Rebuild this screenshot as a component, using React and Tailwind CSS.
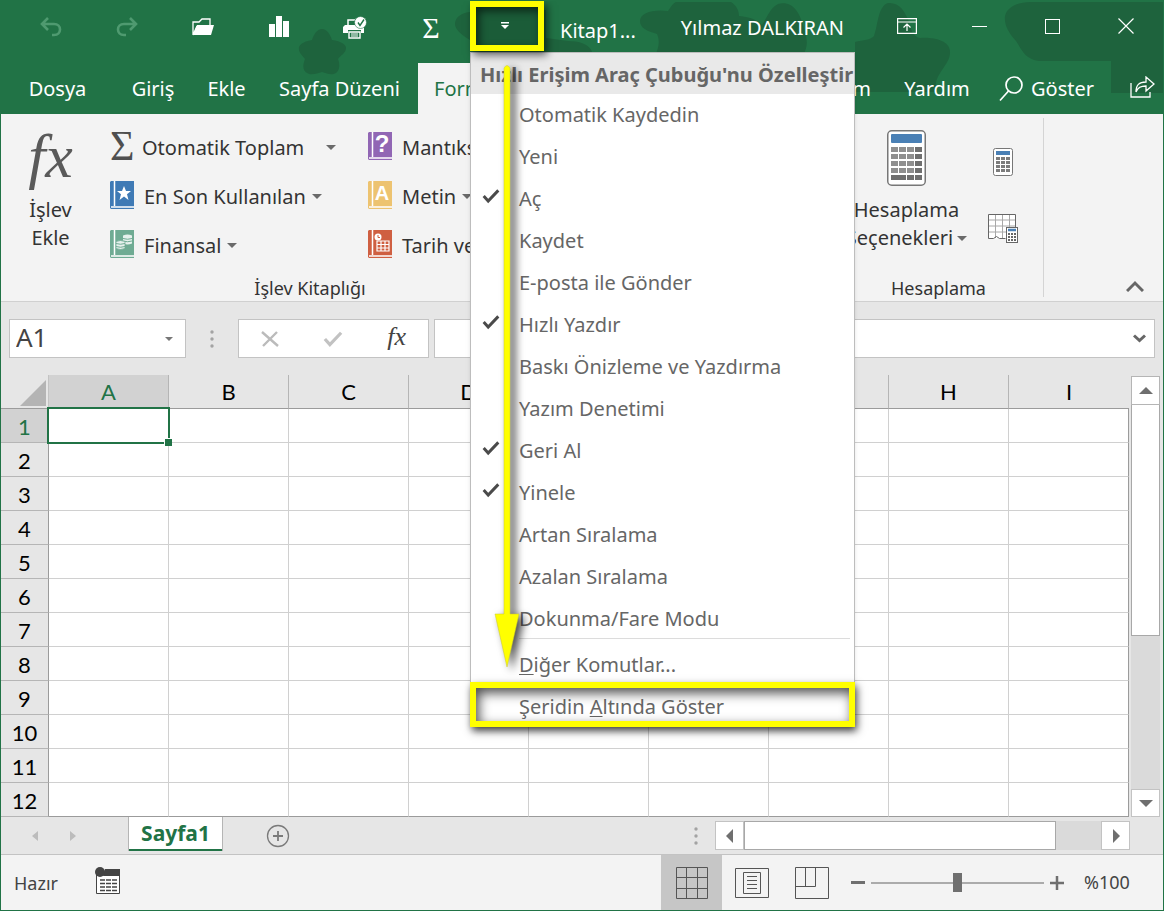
import React from "react";

const menuItems = [
  { label: "Otomatik Kaydedin" },
  { label: "Yeni" },
  { label: "Aç", checked: true },
  { label: "Kaydet" },
  { label: "E-posta ile Gönder" },
  { label: "Hızlı Yazdır", checked: true },
  { label: "Baskı Önizleme ve Yazdırma" },
  { label: "Yazım Denetimi" },
  { label: "Geri Al", checked: true },
  { label: "Yinele", checked: true },
  { label: "Artan Sıralama" },
  { label: "Azalan Sıralama" },
  { label: "Dokunma/Fare Modu" },
];

const columns = ["A", "B", "C", "D", "E", "F", "G", "H", "I"];
const rows = [1, 2, 3, 4, 5, 6, 7, 8, 9, 10, 11, 12];

const Caret = ({ className = "" }) => (
  <svg width="10" height="5" viewBox="0 0 10 5" className={`shrink-0 ${className}`}>
    <path d="M0 0h10L5 5z" fill="#6a6a6a" />
  </svg>
);

const Dots = () => (
  <svg width="4" height="18" viewBox="0 0 4 18" fill="#a3a3a3">
    <circle cx="2" cy="2" r="1.7" />
    <circle cx="2" cy="9" r="1.7" />
    <circle cx="2" cy="16" r="1.7" />
  </svg>
);

const Triangle = ({ d, color = "#6f6f6f" }) => (
  <svg width="14" height="14" viewBox="0 0 14 14">
    <path d={d} fill={color} />
  </svg>
);

/* Dark shapes behind the title bar */
const HeaderArt = () => (
  <svg
    className="absolute inset-0 pointer-events-none"
    width="1162"
    height="113"
    viewBox="1 1 1162 113"
    fill="#1e633d"
  >
    <path d="M322 29c5 0 8 5 10 11 8 1 14 4 14 8 0 5-5 7-8 11 2 5 2 11-2 14-5 3-9 0-14-1-5 1-10 4-15 1-5-3-4-9-2-14-3-4-7-7-6-12 2-4 7-6 13-7 2-6 5-11 10-11z" />
    <path d="M470 12c-10 1-15 6-15 12 0 5 6 11 15 16v20h110c8 0 13-3 12-8-2-8-14-11-24-11l-22-3V10z" />
    <path d="M676 2h55c6 4 8 9 8 14 12 1 18 4 23 9 6-9 8-17 16-21 8-2 14 1 18 6 6 8 8 18 10 26 2 8 0 16-4 20H655c4-9 5-15 2-22-10-3-17-6-17-13 0-8 13-12 28-10 3-4 4-7 8-9z" />
    <path d="M888 3c11-1 17 8 21 19 2 9 5 15 11 16 15-1 29 3 30 13 1 12-12 20-14 32l1 9H855V42c8-2 16-2 19-6 4-11 4-30 14-33z" />
    <path d="M1031 2h133v91h-53V61h-72c-14-2-17-11-23-20-8-9-12-17-11-25 2-8 11-14 26-14z" />
  </svg>
);

const UndoIcon = () => (
  <svg width="22" height="20" viewBox="0 0 22 20" fill="none" stroke="#4f9a70" strokeWidth="2.6">
    <path d="M8 1L2 7l6 6M2 7h12c8 0 8 11 0 11h-2" />
  </svg>
);

const FolderIcon = () => (
  <svg width="22" height="18" viewBox="0 0 22 18">
    <path d="M1 17V4h6l3-3h8v6M1 17l4-9" fill="none" stroke="#fff" strokeWidth="1.3" />
    <path d="M5 7h17l-3 10H1z" fill="#fff" />
  </svg>
);

const ChartIcon = () => (
  <svg width="20" height="22" viewBox="0 0 20 22" fill="#fff">
    <path d="M0 8h6v13H0zM7 0h6v21H7zM14 5h6v16h-6z" />
  </svg>
);

const PrinterIcon = () => (
  <svg width="24" height="23" viewBox="0 0 24 23">
    <path d="M5 9V4h7" fill="none" stroke="#fff" strokeWidth="1.5" />
    <path d="M2 9h19v8h-3v-3H5v3H0v-6z" fill="#fff" />
    <path d="M6 16h11v6H6z" fill="#217346" stroke="#fff" strokeWidth="1.4" />
    <path d="M8 18h7M8 20h7" stroke="#fff" />
    <circle cx="17.5" cy="6.5" r="6" fill="#fff" stroke="#217346" strokeWidth=".6" />
    <path d="M15 6.5l2 3 4-6" fill="none" stroke="#217346" strokeWidth="1.4" />
  </svg>
);

const CheckMark = ({ color = "#4a4a4a", size = 18 }) => (
  <svg width={size} height={size} viewBox="0 0 16 16">
    <path d="M1.5 8l4 4.5L14.5 3" fill="none" stroke={color} strokeWidth="2.6" />
  </svg>
);

const Book = ({ color, children }) => (
  <span className="relative inline-flex w-6 h-7 shrink-0 items-center justify-center">
    <svg width="24" height="28" viewBox="0 0 24 28" className="absolute inset-0">
      <path d="M1 0h23v28H1l-1-1V1z" fill={color} />
      <path d="M4.5 0v25M1 26h23" stroke="#fff" strokeWidth="1.5" />
    </svg>
    <span className="relative pl-1 pb-1 text-white">{children}</span>
  </span>
);

const StarIcon = () => (
  <svg width="16" height="16" viewBox="0 0 16 16" fill="#fff">
    <path d="M8 1l2 5h5l-4 3.3L12.5 15 8 11.5 3.5 15 5 9.3 1 6h5z" />
  </svg>
);

const CoinsIcon = () => (
  <svg width="16" height="16" viewBox="0 0 16 16">
    <path d="M7 1.5q4.5-2 9 0v8q-4.5 2-9 0z" fill="#e6f1ed" />
    <path d="M7 4.5q4.5 1.5 9 0M7 7q4.5 1.5 9 0" fill="none" stroke="#6fab93" />
    <path d="M0 7.5q4.5-2 9 0v7q-4.5 2-9 0z" fill="#e6f1ed" stroke="#6fab93" strokeWidth=".8" />
    <path d="M0 9.5q4.5 1.5 9 0M0 12.5q4.5 1.5 9 0" fill="none" stroke="#6fab93" />
  </svg>
);

const DateIcon = () => (
  <svg width="18" height="20" viewBox="0 0 18 20">
    <circle cx="5" cy="5" r="3.5" fill="#fff" />
    <path d="M5 3v2.5h2" stroke="#cf5f41" fill="none" />
    <path d="M4 9h12v10H4zM8 9v10M12 9v10M4 12.5h12M4 16h12" fill="none" stroke="#fff" strokeWidth="1.2" />
  </svg>
);

const Calculator = () => (
  <svg width="39" height="56" viewBox="0 0 39 56">
    <rect x=".75" y=".75" width="37.5" height="54.5" rx="4" fill="#fff" stroke="#777" strokeWidth="1.5" />
    <rect x="4" y="4" width="31" height="9" rx="1" fill="#4a80b5" />
    <path d="M4 19.5h31M4 26.5h31M4 33.5h31M4 40.5h31" stroke="#8f8f8f" strokeWidth="5" strokeDasharray="7 1" />
    <path d="M28 19.5h7M28 26.5h7M28 33.5h7M28 40.5h7M4 47.5h15M20 47.5h7M28 47.5h7" stroke="#6f6f6f" strokeWidth="5" />
  </svg>
);

const SmallCalculator = () => (
  <svg width="20" height="28" viewBox="0 0 20 28">
    <rect x=".5" y=".5" width="19" height="27" rx="2" fill="#fff" stroke="#777" />
    <path d="M3 3h14v4H3z" fill="#4a80b5" />
    <path
      d="M3 10.5h4M8 10.5h4M13 10.5h4M3 14.5h4M8 14.5h4M13 14.5h4M3 18.5h4M8 18.5h4M13 18.5h4M3 22.5h4M8 22.5h4M13 22.5h4"
      stroke="#7c7c7c"
      strokeWidth="3"
    />
  </svg>
);

const SheetCalcIcon = () => (
  <svg width="30" height="30" viewBox="0 0 30 30" fill="none">
    <path d="M.5 .5h27v24H.5z" fill="#fff" />
    <path d="M1 6h26M1 12h26M1 18h26M7.5 1v23M14.5 1v23M21.5 1v23" stroke="#a8a8a8" />
    <path d="M27.5 13V.5H.5v24h5l3-2 3 2h6" stroke="#666" />
    <rect x="18.5" y="13.5" width="11" height="15" fill="#fff" stroke="#666" />
    <path d="M20 16h8" stroke="#4a80b5" strokeWidth="2.5" />
    <path d="M20 20h8M20 23h8M20 26h8" stroke="#666" strokeWidth="2" strokeDasharray="2 1" />
  </svg>
);

const RibbonRow = ({ icon, label }) => (
  <button className="flex h-[49px] items-center gap-2.5 whitespace-nowrap text-left">
    {icon}
    <span className="flex items-center gap-1.5 pt-1">
      {label}
      <Caret />
    </span>
  </button>
);

const QuickMenu = () => (
  <div
    role="menu"
    className="absolute left-0 top-[51px] z-20 w-[385px] border border-[#bdbdbd] bg-white text-[20px] text-[#666] shadow-md"
  >
    <div className="flex h-[41px] items-center whitespace-nowrap bg-[#e9e9e9] pl-[9px] pt-0.5 font-bold">
      Hızlı Erişim Araç Çubuğu'nu Özelleştir
    </div>
    {menuItems.map((item) => (
      <button
        key={item.label}
        role="menuitemcheckbox"
        aria-checked={!!item.checked}
        className="flex h-[42px] w-full items-center text-left"
      >
        <span className="w-12 pl-[11px] pb-1.5">{item.checked && <CheckMark />}</span>
        {item.label}
      </button>
    ))}
    <div className="ml-12 mr-1 -mt-0.5 mb-[5px] border-t border-[#dcdcdc]" />
    <button role="menuitem" className="flex h-[42px] w-full items-center pl-12">
      <span>
        <u className="decoration-1 underline-offset-2">D</u>iğer Komutlar...
      </span>
    </button>
    <button role="menuitem" className="flex h-[40px] w-full items-center pl-12 pt-0.5">
      <span>
        Şeridin <u className="decoration-1 underline-offset-2">A</u>ltında Göster
      </span>
    </button>

    {/* Highlight and arrow */}
    <div className="pointer-events-none absolute -inset-x-px -bottom-px h-[45px] border-6 border-[#ffff00] shadow-[2px_4px_8px_rgba(0,0,0,0.7),inset_3px_5px_12px_rgba(0,0,0,0.7)]" />
    <svg
      className="pointer-events-none absolute left-[22px] top-[11px] drop-shadow-[5px_3px_4px_rgba(0,0,0,0.7)]"
      width="28"
      height="604"
      viewBox="0 0 28 604"
    >
      <path d="M11 4q3-5 6 0v546h9l-12 53L2 550h9z" fill="#ffff00" stroke="#c9c92c" strokeWidth=".5" />
    </svg>
  </div>
);

const TitleBar = () => (
  <div className="relative flex h-[62px] items-start text-[20px] text-white">
    <div className="flex pl-3">
      {[
        ["Geri Al", <UndoIcon />],
        ["Yinele", <span className="-scale-x-100"><UndoIcon /></span>],
        ["Aç", <FolderIcon />],
        ["Grafik", <ChartIcon />],
        ["Hızlı Yazdır", <PrinterIcon />],
        ["Toplam", <span className="font-[Liberation_Serif,serif] text-[30px]">Σ</span>],
      ].map(([name, icon]) => (
        <button key={name} aria-label={name} className="flex h-[52px] w-[76px] items-center justify-center">
          {icon}
        </button>
      ))}
      <div className="relative z-20 ml-px">
        <button
          aria-label="Hızlı Erişim Araç Çubuğu'nu Özelleştir"
          className="relative z-30 flex h-[50px] w-[74px] items-center justify-center border-6 border-[#ffff00] bg-[#1b5c38] shadow-[3px_4px_8px_rgba(0,0,0,0.6),inset_3px_4px_8px_rgba(0,0,0,0.6)]"
        >
          <svg width="8" height="8" viewBox="0 0 8 8" fill="#fff" className="mr-1">
            <path d="M0 0h8v1.5H0zM0 3h8L4 7z" />
          </svg>
        </button>
        <QuickMenu />
      </div>
    </div>
    <span className="ml-4 pt-[15px]">Kitap1...</span>
    <span className="ml-auto whitespace-nowrap pt-3 pr-[26px]">Yılmaz DALKIRAN</span>
    <div className="flex pr-px">
      <button aria-label="Şerit seçenekleri" className="flex h-[50px] w-[73px] items-center justify-center">
        <svg width="20" height="16" viewBox="0 0 20 16" fill="none" stroke="#fff" strokeWidth="1.2">
          <path d="M.6.6h18.8v14.8H.6zM.6 4h18.8M10 13V6M6.5 9.5L10 6l3.5 3.5" />
        </svg>
      </button>
      <button aria-label="Simge durumuna küçült" className="flex h-[50px] w-[73px] items-center justify-center">
        <span className="h-px w-[15px] bg-white" />
      </button>
      <button aria-label="Ekranı kapla" className="flex h-[50px] w-[73px] items-center justify-center">
        <span className="size-[15px] border border-white" />
      </button>
      <button aria-label="Kapat" className="flex h-[50px] w-[73px] items-center justify-center">
        <svg width="16" height="16" viewBox="0 0 16 16" stroke="#fff" strokeWidth="1.2">
          <path d="M.5.5l15 15M15.5.5l-15 15" />
        </svg>
      </button>
    </div>
  </div>
);

const Tabs = () => (
  <nav className="relative flex h-[51px] items-stretch text-[20px] text-white">
    <button className="w-[113px]">Dosya</button>
    <button className="w-[78px]">Giriş</button>
    <button className="w-[69px]">Ekle</button>
    <button className="w-[157px] whitespace-nowrap">Sayfa Düzeni</button>
    <button className="bg-[#f3f3f3] px-4 text-[#217346]">Formüller</button>
    <button className="ml-auto px-4">Görünüm</button>
    <button className="w-[100px]">Yardım</button>
    <button className="flex w-[126px] items-center gap-2 pl-3">
      <svg width="24" height="26" viewBox="0 0 24 26" fill="none" stroke="#fff" strokeWidth="1.7">
        <circle cx="15" cy="9" r="8" />
        <path d="M9.5 15L1 24.5" />
      </svg>
      Göster
    </button>
    <button aria-label="Paylaş" className="flex w-[50px] items-center justify-end pb-1 pr-2">
      <svg width="25" height="22" viewBox="0 0 25 22" fill="none" stroke="#fff" strokeWidth="1.3">
        <path d="M1 7v14h19v-5" />
        <path d="M6 16c0-7 3-10 10-10V1l8 7-8 7v-5c-5 0-8 1-10 6z" />
      </svg>
    </button>
  </nav>
);

const Ribbon = () => (
  <div className="flex h-[188px] border-b border-[#d0d0d0] bg-[#f3f3f3] text-[20px] text-[#333]">
    {/* İşlev Kitaplığı */}
    <section className="flex w-[618px] flex-col">
      <div className="flex">
        <button className="flex w-[99px] flex-col items-center pt-2.5 leading-7">
          <span className="flex h-[72px] items-center pb-2 font-[Liberation_Serif,serif] text-[62px] italic text-[#5a5a5a]">
            fx
          </span>
          <span>İşlev</span>
          <span>Ekle</span>
        </button>
        <div className="flex w-[268px] flex-col items-start pl-2.5 pt-[7px]">
          <button className="flex h-[49px] items-center gap-2 whitespace-nowrap">
            <span className="w-6 text-center font-[Liberation_Serif,serif] text-[42px] leading-8 text-[#4f4f4f]">Σ</span>
            <span className="flex items-center pt-1">
              Otomatik Toplam
              <Caret className="ml-[22px]" />
            </span>
          </button>
          <RibbonRow icon={<Book color="#3f7ab5"><StarIcon /></Book>} label="En Son Kullanılan" />
          <RibbonRow icon={<Book color="#6fab93"><CoinsIcon /></Book>} label="Finansal" />
        </div>
        <div className="flex flex-col items-start pt-[7px]">
          <RibbonRow
            icon={<Book color="#9166b4"><span className="font-[Liberation_Sans,sans-serif] text-[24px] font-bold">?</span></Book>}
            label="Mantıksal"
          />
          <RibbonRow
            icon={<Book color="#edc370"><span className="font-[Liberation_Sans,sans-serif] font-bold">A</span></Book>}
            label="Metin"
          />
          <RibbonRow icon={<Book color="#cf5f41"><DateIcon /></Book>} label="Tarih ve Saat" />
        </div>
      </div>
      <div className="mt-auto pb-px text-center text-[18px] leading-6">İşlev Kitaplığı</div>
    </section>

    {/* Hesaplama */}
    <section className="my-1 ml-auto flex w-[210px] flex-col border-r border-[#d4d4d4]">
      <div className="flex">
        <button className="flex w-[145px] flex-col items-center pt-3 leading-7">
          <span className="h-[66px]">
            <Calculator />
          </span>
          <span>Hesaplama</span>
          <span className="flex items-center gap-1">
            Seçenekleri <Caret />
          </span>
        </button>
        <div className="flex flex-1 flex-col items-center gap-[38px] pt-[30px] pr-[17px]">
          <button aria-label="Şimdi Hesapla">
            <SmallCalculator />
          </button>
          <button aria-label="Sayfayı Hesapla">
            <SheetCalcIcon />
          </button>
        </div>
      </div>
      <div className="mt-auto text-center text-[18px] leading-[18px]">Hesaplama</div>
    </section>
    <div className="flex w-[119px] items-end justify-end pr-[19px] pb-[9px]">
      <button aria-label="Şeridi daralt">
        <svg width="18" height="12" viewBox="0 0 18 12" fill="none" stroke="#666" strokeWidth="3">
          <path d="M1 11l8-8 8 8" />
        </svg>
      </button>
    </div>
  </div>
);

const FormulaBar = () => (
  <div className="flex h-[73px] items-center bg-[#e6e6e6] px-2">
    <div className="flex h-[39px] w-[177px] items-center border border-[#c3c3c3] bg-white pr-3">
      <input
        aria-label="Ad Kutusu"
        defaultValue="A1"
        className="h-9 w-full min-w-0 pl-1.5 pb-0.5 text-[26px] text-[#444] outline-none"
      />
      <svg width="8" height="4" viewBox="0 0 8 4" className="shrink-0">
        <path d="M0 0h8L4 4z" fill="#777" />
      </svg>
    </div>
    <div className="flex w-[52px] justify-center">
      <Dots />
    </div>
    <div className="flex h-[39px] w-[191px] items-center justify-around border border-[#c3c3c3] bg-white">
      <button aria-label="İptal">
        <svg width="18" height="16" viewBox="0 0 18 16" stroke="#bbb" strokeWidth="2.4">
          <path d="M1 1l16 14M16 1L2 15" />
        </svg>
      </button>
      <button aria-label="Gir">
        <CheckMark color="#c2c2c2" size={20} />
      </button>
      <button
        aria-label="İşlev Ekle"
        className="pb-1 font-[Liberation_Serif,serif] text-[26px] italic leading-7 text-[#444]"
      >
        fx
      </button>
    </div>
    <div className="ml-[5px] flex h-[39px] flex-1 items-center border border-[#c3c3c3] bg-white pr-2">
      <input aria-label="Formül çubuğu" className="min-w-0 flex-1 outline-none" />
      <svg width="13" height="9" viewBox="0 0 13 9" fill="none" stroke="#666" strokeWidth="3">
        <path d="M1 1.5l5.5 5 5.5-5" />
      </svg>
    </div>
  </div>
);

const Sheet = () => (
  <div className="flex bg-[#e6e6e6]">
    <div className="flex-1">
      <table className="w-full table-fixed border-separate border-spacing-0 font-[Lato,sans-serif] text-[22px] leading-7 text-black">
        <thead>
          <tr className="h-[34px]">
            <th className="w-12 border-b border-r border-b-[#9b9b9b] border-r-[#c3c3c3] p-0">
              <svg width="26" height="26" viewBox="0 0 26 26" className="ml-auto mr-0.5 mt-0.5">
                <path d="M26 0v26H0z" fill="#b4b4b4" />
              </svg>
            </th>
            {columns.map((col) => (
              <th
                key={col}
                scope="col"
                className={`border-b border-b-[#9b9b9b] p-0 pt-px font-normal ${
                  col === "I" ? "" : "border-r border-r-[#b5b5b5]"
                } ${col === "A" ? "bg-[#d2d2d2] text-[#217346]" : ""}`}
              >
                {col}
              </th>
            ))}
          </tr>
        </thead>
        <tbody>
          {rows.map((row) => (
            <tr key={row} className="h-[34px]">
              <th
                scope="row"
                className={`border-b border-r border-b-[#b5b5b5] border-r-[#9b9b9b] p-0 pt-0.5 font-normal ${
                  row === 1 ? "bg-[#d2d2d2] text-[#217346]" : ""
                }`}
              >
                {row}
              </th>
              {columns.map((col) => (
                <td
                  key={col}
                  className={`relative border-b border-r bg-white p-0 ${
                    col === "I" ? "border-r-[#9b9b9b]" : "border-r-[#d0d0d0]"
                  } ${row === 12 ? "border-b-[#9b9b9b]" : "border-b-[#d0d0d0]"}`}
                >
                  {/* Active cell */}
                  {row === 1 && col === "A" && (
                    <div className="absolute -inset-0.5 z-5 border-2 border-[#217346]">
                      <span className="absolute -bottom-1 -right-1 size-[8px] border-l border-t border-white bg-[#217346]" />
                    </div>
                  )}
                </td>
              ))}
            </tr>
          ))}
        </tbody>
      </table>
    </div>
    <div className="flex w-[34px] flex-col pl-0.5 pr-[3px] pt-px">
      <button
        aria-label="Yukarı"
        className="flex h-[29px] items-center justify-center border border-[#b5b5b5] bg-white"
      >
        <Triangle d="M0 10h14L7 3z" />
      </button>
      <div className="flex-1 bg-[#dadada]">
        <div className="h-[231px] border border-t-0 border-[#a8a8a8] bg-white" />
      </div>
      <button
        aria-label="Aşağı"
        className="flex h-[28px] items-center justify-center border border-[#c3c3c3] bg-white"
      >
        <Triangle d="M0 4h14l-7 7z" />
      </button>
    </div>
  </div>
);

const SheetBar = () => (
  <div className="flex h-[38px] items-center border-b border-[#c3c3c3] bg-[#e6e6e6]">
    <div className="flex w-[128px] gap-6 pl-[27px]">
      <button aria-label="Önceki sayfa">
        <Triangle d="M10 2v10L4 7z" color="#bcbcbc" />
      </button>
      <button aria-label="Sonraki sayfa">
        <Triangle d="M4 2v10l6-5z" color="#bcbcbc" />
      </button>
    </div>
    <button className="h-[34px] w-[93px] self-start border-b-2 border-[#217346] bg-white text-[21px] font-bold leading-8 text-[#217346] shadow-[1px_0_0_#b5b5b5,-1px_0_0_#b5b5b5]">
      Sayfa1
    </button>
    <button aria-label="Yeni sayfa" className="ml-11">
      <svg width="24" height="24" viewBox="0 0 24 24" fill="none" stroke="#7a7a7a">
        <circle cx="12" cy="12" r="10.5" strokeWidth="1.3" />
        <path d="M12 7v10M7 12h10" strokeWidth="1.8" />
      </svg>
    </button>
    <div className="ml-auto mr-[17px] flex">
      <Dots />
    </div>
    <div className="mr-[33px] flex h-[29px] w-[415px] bg-[#dadada]">
      <button aria-label="Sola" className="flex w-[29px] items-center justify-center border border-[#c3c3c3] bg-white">
        <Triangle d="M10 0v14L3 7z" />
      </button>
      <div className="flex-1">
        <div className="h-full w-7/8 border border-[#a8a8a8] bg-white" />
      </div>
      <button aria-label="Sağa" className="flex w-[29px] items-center justify-center border border-[#c3c3c3] bg-white">
        <Triangle d="M4 0v14l7-7z" />
      </button>
    </div>
  </div>
);

const StatusBar = () => (
  <div className="flex h-[55px] items-center bg-[#f3f3f3] text-[18px] text-[#444]">
    <span className="w-[94px] pl-[13px] pt-0.5">Hazır</span>
    <button aria-label="Makro kaydet" className="pb-1">
      <svg width="26" height="28" viewBox="0 0 26 28" fill="none">
        <path d="M1.5 8v18.5h23V2" fill="#fff" stroke="#444" />
        <path d="M10 2h15v7H8z" fill="#444" />
        <path d="M5 13h17M5 16.5h17M5 20h17M5 23.5h17" stroke="#444" strokeWidth="1.3" strokeDasharray="5 1" />
        <circle cx="5" cy="5" r="5" fill="#444" />
      </svg>
    </button>
    <div className="ml-auto flex self-stretch">
      <button aria-label="Normal" className="flex w-[61px] items-center justify-center bg-[#c6c6c6]">
        <svg width="32" height="32" viewBox="0 0 32 32" fill="none" stroke="#555">
          <path d="M.5.5h31v31H.5zM10.5.5v31M21.5.5v31M.5 10.5h31M.5 21.5h31" />
        </svg>
      </button>
      <button aria-label="Sayfa Düzeni" className="flex w-[60px] items-center justify-center">
        <svg width="34" height="30" viewBox="0 0 34 30" fill="none" stroke="#555">
          <path d="M.5.5h33v29H.5zM8.5 4.5h17v21h-17zM12 8.5h10M12 12.5h10M12 16.5h10M12 20.5h10" />
        </svg>
      </button>
      <button aria-label="Sayfa Sonu Önizleme" className="flex w-[60px] items-center justify-center">
        <svg width="34" height="32" viewBox="0 0 34 32" fill="none" stroke="#555">
          <path d="M.5.5h33v31H.5zM.5 19.5h20V.5M10.5.5v19" />
        </svg>
      </button>
    </div>
    <div className="flex w-[222px] items-center justify-end gap-1.5">
      <button aria-label="Uzaklaştır" className="h-[3px] w-[14px] bg-[#6f6f6f]" />
      <input
        type="range"
        aria-label="Yakınlaştırma"
        defaultValue="50"
        className="h-0.5 w-[173px] appearance-none bg-[#ababab] [&::-webkit-slider-thumb]:h-[19px] [&::-webkit-slider-thumb]:w-[9px] [&::-webkit-slider-thumb]:appearance-none [&::-webkit-slider-thumb]:bg-[#6f6f6f]"
      />
      <button aria-label="Yakınlaştır">
        <svg width="14" height="14" viewBox="0 0 14 14" stroke="#6f6f6f" strokeWidth="2.5">
          <path d="M7 0v14M0 7h14" />
        </svg>
      </button>
    </div>
    <span className="w-[99px] pl-[20px]">%100</span>
  </div>
);

const App = () => {
  return (
    <div className="flex min-h-screen w-full flex-col overflow-hidden border border-[#217346] bg-[#f3f3f3] font-[Noto_Sans,sans-serif]">
      <header className="relative z-10 bg-[#217346]">
        <HeaderArt />
        <TitleBar />
        <Tabs />
      </header>
      <Ribbon />
      <FormulaBar />
      <Sheet />
      <SheetBar />
      <StatusBar />
    </div>
  );
};

export default App;
